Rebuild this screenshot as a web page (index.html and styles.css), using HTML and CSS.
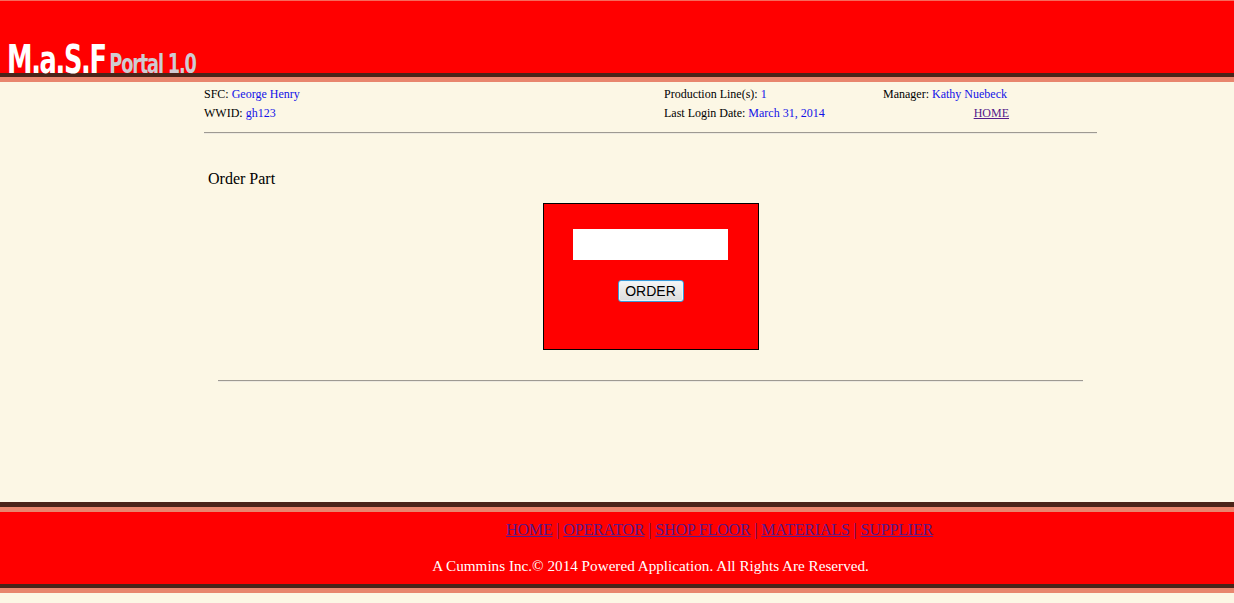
FILE: index.html
```html
<!DOCTYPE html>
<html>
<head>
<meta charset="utf-8">
<title>M.a.S.F Portal 1.0</title>
<link rel="stylesheet" href="styles.css">
</head>
<body>
<header class="top">
  <div class="top-red">
    <div class="logo"><span class="logo-main">M.a.S.F</span><span class="logo-sub">Portal 1.0</span></div>
  </div>
  <div class="stripes"></div>
</header>

<main class="wrap">
  <div class="info">
    <div class="cell">SFC: <span class="val">George Henry</span></div>
    <div class="cell">Production Line(s): <span class="val">1</span></div>
    <div class="cell">Manager: <span class="val">Kathy Nuebeck</span></div>
    <div class="cell">WWID: <span class="val">gh123</span></div>
    <div class="cell">Last Login Date: <span class="val">March 31, 2014</span></div>
    <div class="cell right"><a class="visited" href="#">HOME</a></div>
  </div>
  <div class="rule"></div>

  <h2 class="title">Order Part</h2>

  <form class="order-box">
    <input class="part-input" type="text">
    <button class="order-btn" type="button">ORDER</button>
  </form>

  <div class="rule rule-inner"></div>
</main>

<footer class="bottom">
  <div class="stripes"></div>
  <div class="bottom-red">
    <div class="wrap foot-inner">
      <nav class="foot-links"><a href="#">HOME</a> | <a href="#">OPERATOR</a> | <a href="#">SHOP FLOOR</a> | <a href="#">MATERIALS</a> | <a href="#">SUPPLIER</a></nav>
      <p class="copy">A Cummins Inc.© 2014 Powered Application. All Rights Are Reserved.</p>
    </div>
  </div>
  <div class="stripes"></div>
</footer>
</body>
</html>
```

FILE: styles.css
```css
html, body {
  margin: 0;
  padding: 0;
  background: #fcf7e5;
  font-family: "Liberation Serif", "Times New Roman", serif;
  color: #000;
}

.top-red {
  background: #ff0000;
  border-top: 1px solid #f66a5c;
  height: 72px;
  display: flex;
  align-items: flex-end;
  padding-left: 7px;
}

.stripes {
  height: 0;
  border-top: 4px solid #4a2419;
  border-bottom: 5px solid #e8866e;
}

.logo {
  display: flex;
  align-items: baseline;
  line-height: 30px;
  margin-bottom: -6px;
  font-family: "DejaVu Sans Condensed", "Liberation Sans", sans-serif;
  font-weight: bold;
  transform: scaleX(0.73);
  transform-origin: left bottom;
}

.logo-main {
  color: #ffffff;
  font-size: 39px;
  letter-spacing: -1.8px;
}

.logo-sub {
  color: #cfcbd2;
  font-size: 27px;
  letter-spacing: -1.6px;
  margin-left: 5px;
}

.wrap {
  margin-left: 204px;
  width: 893px;
}

.info {
  display: grid;
  grid-template-columns: 460px 219px 126px;
  font-size: 12px;
  line-height: 19px;
  padding-top: 3px;
}

.cell { white-space: nowrap; }
.cell.right { text-align: right; }

.val { color: #1212e8; }

a { color: #551a8b; }
.visited { color: #551a8b; }

.rule {
  margin-top: 9px;
  height: 0;
  border-top: 1px solid #9e9a92;
  border-bottom: 1px solid #eeeae0;
}

.title {
  margin: 36px 0 0 4px;
  font-size: 16px;
  font-weight: normal;
  line-height: 18px;
}

.order-box {
  margin: 15px auto 0;
  width: 214px;
  height: 145px;
  background: #ff0000;
  border: 1px solid #000;
  display: flex;
  flex-direction: column;
  align-items: center;
  box-sizing: content-box;
}

.part-input {
  margin-top: 25px;
  width: 155px;
  height: 31px;
  border: none;
  background: #fff;
  padding: 0;
  box-sizing: border-box;
  outline: none;
}

.order-btn {
  margin-top: 20px;
  width: 66px;
  height: 22px;
  padding: 0;
  font-family: "Liberation Sans", Arial, sans-serif;
  font-size: 14px;
  color: #000;
  border: 1px solid #3b9ad8;
  border-radius: 3px;
  background: linear-gradient(#f6f6f6, #dcdcdc);
  box-shadow: inset 0 0 0 1px #e8f4fb;
}

.rule-inner {
  margin: 30px 14px 0;
}

.bottom {
  margin-top: 120px;
}

.bottom .stripes:first-child {
  border-top-width: 5px;
}

.bottom-red {
  background: #ff0000;
  height: 72px;
}

.foot-inner {
  padding-top: 9px;
  font-size: 16px;
  line-height: 18px;
}

.foot-links {
  padding-left: 302px;
  color: #551a8b;
  white-space: nowrap;
  letter-spacing: -0.15px;
}

.copy {
  margin: 18px 0 0;
  color: #ffffff;
  text-align: center;
  font-size: 15.2px;
}
```
